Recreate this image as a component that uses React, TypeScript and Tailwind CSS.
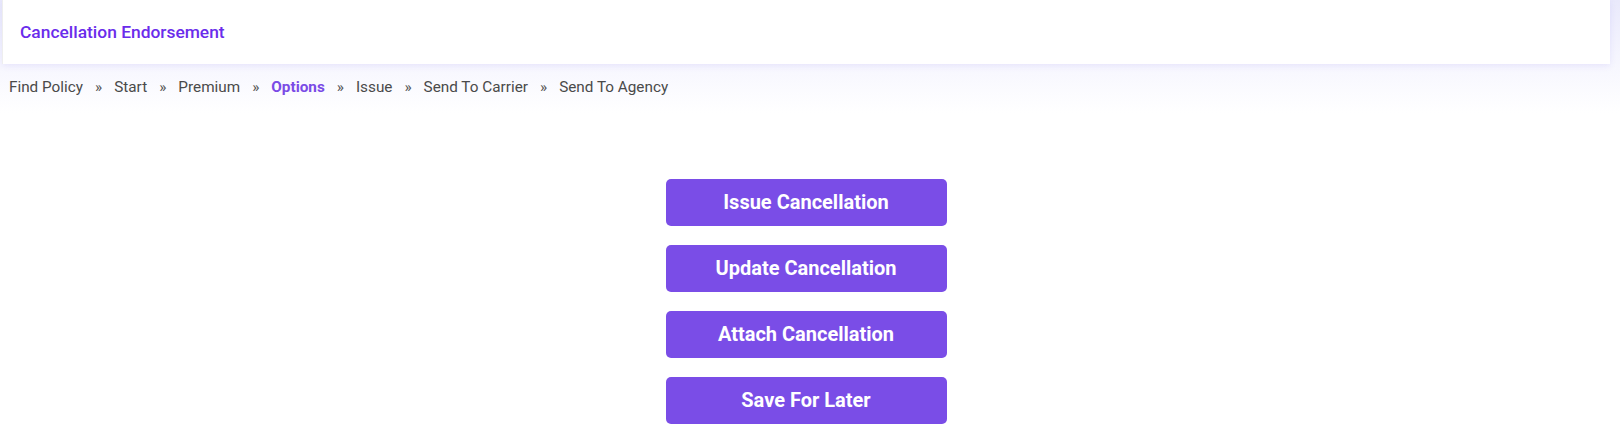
const steps = ["Find Policy", "Start", "Premium", "Options", "Issue", "Send To Carrier", "Send To Agency"];
const active = "Options";

const actions = ["Issue Cancellation", "Update Cancellation", "Attach Cancellation", "Save For Later"];

export default function App() {
  return (
    <div className="min-h-[430px] bg-white font-['Roboto',sans-serif]">
      <div className="pr-[10px] bg-gradient-to-b from-[#e9e9fb] via-[#f5f5fe] to-white pb-[14px]">
        <div className="ml-[2px] h-[64px] bg-white border-l border-[#eeeeee] flex items-center px-[17px] shadow-[0_2px_6px_rgba(120,110,230,0.12)]">
          <h1 className="text-[17.4px] font-medium text-[#6a2ceb]">Cancellation Endorsement</h1>
        </div>
        <nav className="flex items-center pl-[9px] pt-[12px] text-[15.3px] text-[#4a4a4a]">
          {steps.map((s, i) => (
            <span key={s} className="flex items-center">
              {i > 0 && <span className="mx-[12px] text-[#555]">»</span>}
              <span className={s === active ? "font-bold text-[#7a4be6]" : ""}>{s}</span>
            </span>
          ))}
        </nav>
      </div>
      <div className="pr-[8px] flex flex-col items-center gap-[19px] pt-[66px]">
        {actions.map((a) => (
          <button
            key={a}
            className="w-[281px] h-[47px] rounded-[5px] bg-[#7a4de7] text-white text-[20px] font-bold"
          >
            {a}
          </button>
        ))}
      </div>
    </div>
  );
}
